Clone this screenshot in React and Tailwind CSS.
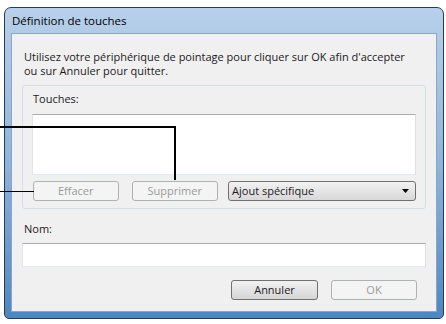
export default function App() {
  const font = { fontFamily: '"Open Sans", "Noto Sans", sans-serif' }

  return (
    <div className="relative w-[446px] h-[324px] bg-white overflow-hidden text-[11px] text-[#1e1a24]" style={font}>
      {/* Window frame */}
      <div className="absolute left-[4px] top-[7px] w-[440px] h-[312px] rounded-t-[7px] rounded-b-[5px] border border-[#2b3a4c] bg-gradient-to-b from-[#b8d0ea] via-[#8fb4dc] to-[#4f86c0] flex flex-col">
        <div className="h-[25px] flex items-center pl-[7px] text-[11.5px] text-black">Définition de touches</div>
        <div className="mx-[6px] mb-[6px] flex-1 border border-[#8aa6c4] bg-[#f0f0f0] flex flex-col">
          <div className="pl-[12px] pt-[16px] leading-[14px] whitespace-nowrap">
            <p>Utilisez votre périphérique de pointage pour cliquer sur OK afin d'accepter</p>
            <p>ou sur Annuler pour quitter.</p>
          </div>

          {/* Touches group */}
          <div className="ml-[10px] mt-[7px] w-[404px] h-[124px] border border-[#d5dfe5] rounded-[3px] flex flex-col px-[9px]">
            <div className="pt-[6px] h-[28px] leading-[14px] pl-[1px]">Touches:</div>
            <div className="h-[61px] border border-[#abadb3] border-l-[#e2e3ea] border-r-[#dbdfe6] border-b-[#e3e9ef] bg-white"></div>
            <div className="mt-[6px] flex items-center h-[20px]">
              <div className="ml-[1px] w-[86px] h-[20px] border border-[#adb2b5] rounded-[3px] bg-[#f4f4f4] flex items-center justify-center text-[#9a9a9a]">Effacer</div>
              <div className="ml-[13px] w-[87px] h-[20px] border border-[#adb2b5] rounded-[3px] bg-[#f4f4f4] flex items-center justify-center text-[#9a9a9a]">Supprimer</div>
              <div className="ml-[10px] w-[189px] h-[20px] border border-[#707070] rounded-[3px] bg-gradient-to-b from-[#f2f2f2] to-[#d8d8d8] flex items-center justify-between pl-[3px] pr-[6px]">
                <span>Ajout spécifique</span>
                <svg width="7" height="4" viewBox="0 0 7 4"><path d="M0 0h7L3.5 4z" fill="#000" /></svg>
              </div>
            </div>
          </div>

          <div className="pl-[12px] mt-[13px] h-[14px] leading-[14px]">Nom:</div>
          <div className="ml-[10px] mt-[7px] w-[404px] h-[24px] border border-[#abadb3] border-l-[#e2e3ea] border-r-[#dbdfe6] border-b-[#e3e9ef] bg-white"></div>

          <div className="mt-[13px] flex h-[20px]">
            <div className="ml-[219px] w-[87px] h-[20px] border border-[#707070] rounded-[3px] bg-gradient-to-b from-[#f2f2f2] to-[#d5d5d5] flex items-center justify-center">Annuler</div>
            <div className="ml-[13px] w-[86px] h-[20px] border border-[#adb2b5] rounded-[3px] bg-[#f4f4f4] flex items-center justify-center text-[#9a9a9a]">OK</div>
          </div>
        </div>
      </div>

      {/* Callout lines */}
      <div className="absolute left-0 top-[126px] w-[176px] h-[2px] bg-black"></div>
      <div className="absolute left-[174px] top-[126px] w-[2px] h-[54px] bg-black"></div>
      <div className="absolute left-0 top-[191px] w-[34px] h-[1px] bg-black"></div>
    </div>
  )
}
